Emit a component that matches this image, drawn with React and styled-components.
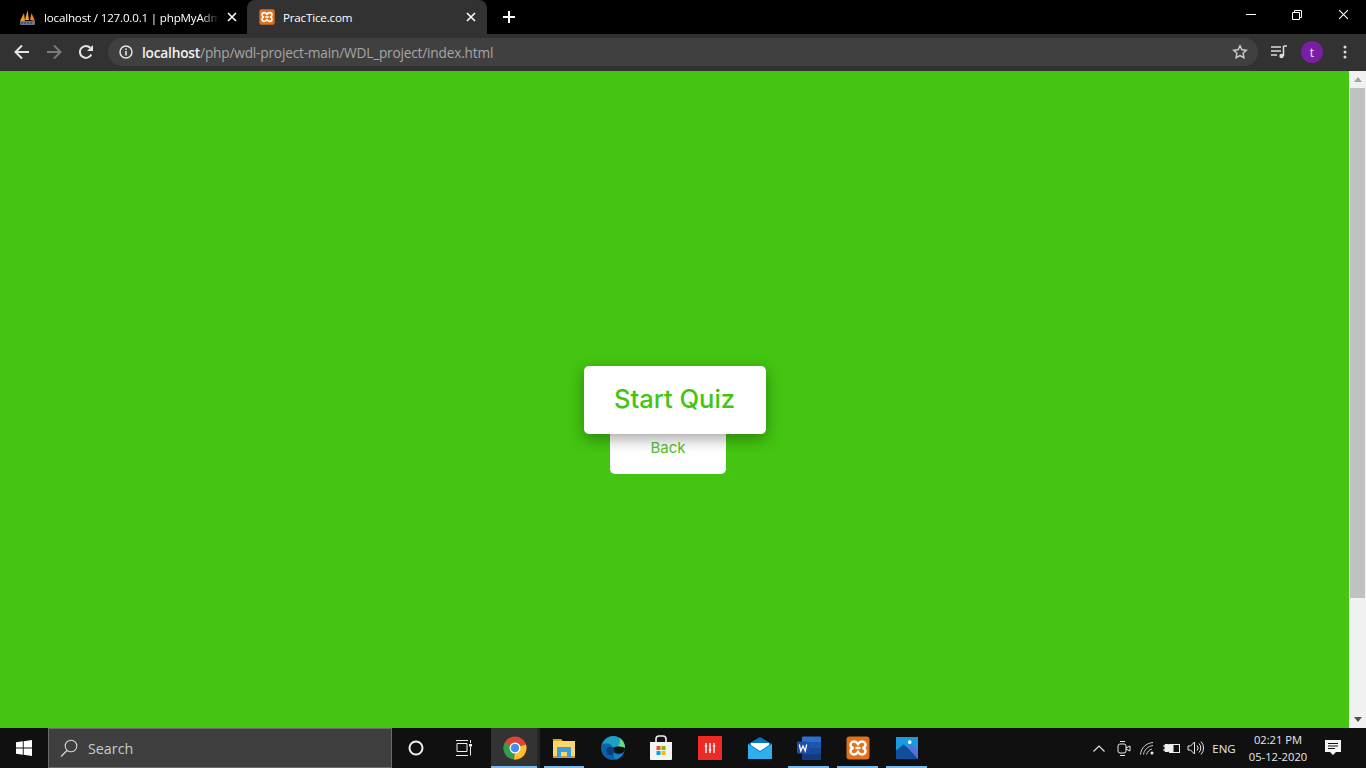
import React from "react";
import styled, { createGlobalStyle } from "styled-components";

const Global = createGlobalStyle`
  html, body {
    margin: 0;
    padding: 0;
    height: 100%;
    overflow: hidden;
  }
  #root {
    height: 100%;
  }
`;

const Screen = styled.div`
  display: flex;
  flex-direction: column;
  width: 1366px;
  height: 768px;
  font-family: "Open Sans", "Noto Sans", sans-serif;
  overflow: hidden;
`;

const TabStrip = styled.div`
  display: flex;
  align-items: flex-end;
  height: 34px;
  background: #000;
  color: #fff;
`;

const Tab = styled.div`
  display: flex;
  align-items: center;
  gap: 8px;
  flex: none;
  box-sizing: border-box;
  width: ${(p) => p.$width}px;
  height: 34px;
  padding: 0 ${(p) => p.$right}px 0 ${(p) => p.$left}px;
  background: ${(p) => (p.$active ? "#323232" : "transparent")};
  border-radius: 8px 8px 0 0;
`;

const TabTitle = styled.span`
  flex: 1;
  min-width: 0;
  font-size: 11.6px;
  letter-spacing: -0.18px;
  white-space: nowrap;
  overflow: hidden;
  -webkit-mask-image: ${(p) =>
    p.$fade ? "linear-gradient(90deg, #000 90%, transparent)" : "none"};
`;

const NewTab = styled.div`
  display: flex;
  align-items: center;
  justify-content: center;
  width: 44px;
  height: 34px;
`;

const WindowControls = styled.div`
  display: flex;
  margin-left: auto;
  align-self: flex-start;
  height: 30px;
`;

const WindowButton = styled.div`
  display: flex;
  align-items: center;
  justify-content: center;
  width: 46px;
  height: 29px;
`;

const Toolbar = styled.div`
  display: flex;
  align-items: center;
  box-sizing: border-box;
  height: 37px;
  padding: 0 0 1px 6px;
  background: #323232;
`;

const NavButton = styled.div`
  display: flex;
  align-items: center;
  justify-content: center;
  flex: none;
  width: ${(p) => p.$width || 32}px;
  height: 32px;
`;

const Omnibox = styled.div`
  display: flex;
  align-items: center;
  flex: none;
  box-sizing: border-box;
  width: 1150px;
  height: 28px;
  margin-left: 6px;
  padding: 0 10px 0 11px;
  background: #404040;
  border-radius: 14px;
`;

const Url = styled.div`
  flex: 1;
  margin-left: 9px;
  font-size: 13.7px;
  letter-spacing: -0.2px;
  color: #a6a6a6;
  white-space: nowrap;
`;

const Host = styled.span`
  color: #f1f1f1;
  font-weight: 600;
`;

const Avatar = styled.div`
  display: flex;
  align-items: center;
  justify-content: center;
  width: 22px;
  height: 22px;
  border-radius: 50%;
  background: #7a1ea6;
  color: #f4e9f9;
  font-size: 12px;
`;

const Viewport = styled.div`
  display: flex;
  flex: 1;
  min-height: 0;
`;

const Page = styled.main`
  display: flex;
  flex: 1;
  flex-direction: column;
  align-items: center;
  box-sizing: border-box;
  padding-top: 295px;
  background: #43c511;
  font-family: "Inter", "Open Sans", sans-serif;
`;

const StartButton = styled.button`
  position: relative;
  z-index: 1;
  width: 182px;
  height: 68px;
  padding: 0 0 3px;
  border: 0;
  border-radius: 5px;
  background: #fff;
  color: #43c511;
  font-family: inherit;
  font-size: 25.5px;
  font-weight: 500;
  box-shadow: 0 5px 15px rgba(0, 0, 0, 0.35);
`;

const BackButton = styled.button`
  width: 116px;
  height: 53px;
  margin: -13px 13px 0 0;
  padding: 0;
  border: 0;
  border-radius: 5px;
  background: #fff;
  color: #52c22f;
  font-family: inherit;
  font-size: 15px;
  font-weight: 400;
`;

const Scrollbar = styled.div`
  display: flex;
  flex-direction: column;
  align-items: center;
  flex: none;
  width: 17px;
  background: #f1f1f1;
`;

const ScrollArrow = styled.div`
  display: flex;
  align-items: center;
  justify-content: center;
  flex: none;
  height: 17px;
`;

const ScrollThumb = styled.div`
  flex: none;
  width: 15px;
  height: 510px;
  background: #c1c1c1;
`;

const ScrollTrack = styled.div`
  flex: 1;
`;

const Taskbar = styled.footer`
  display: flex;
  align-items: center;
  flex: none;
  height: 40px;
  background: #101010;
  color: #e8e8e8;
`;

const StartTile = styled.div`
  display: flex;
  align-items: center;
  justify-content: center;
  flex: none;
  width: 48px;
  height: 40px;
`;

const SearchBox = styled.div`
  display: flex;
  align-items: center;
  flex: none;
  box-sizing: border-box;
  width: 344px;
  height: 40px;
  padding-left: 11px;
  gap: 10px;
  background: #3f3f3f;
  border: 1px solid #6b6b6b;
  color: #c9c9c9;
  font-size: 14.3px;
`;

const TaskCell = styled.div`
  position: relative;
  display: flex;
  align-items: center;
  justify-content: center;
  flex: none;
  box-sizing: border-box;
  width: ${(p) => p.$width || 48}px;
  height: 40px;
  margin-left: ${(p) => (p.$active ? 3 : 0)}px;
  padding-left: ${(p) => (p.$active ? 1 : 0)}px;
  background: ${(p) => (p.$active ? "#333" : "transparent")};
  border-right: ${(p) => (p.$active ? "3px solid #262626" : "0")};

  &::after {
    content: "";
    display: ${(p) => (p.$open ? "block" : "none")};
    position: absolute;
    left: ${(p) => (p.$active ? 0 : 4)}px;
    right: ${(p) => (p.$active ? 0 : 4)}px;
    bottom: 0;
    height: 2px;
    background: #76b9ed;
  }
`;

const Tray = styled.div`
  display: flex;
  align-items: center;
  margin-left: auto;
  height: 40px;
`;

const TrayIcon = styled.div`
  display: flex;
  align-items: center;
  justify-content: center;
  flex: none;
  width: ${(p) => p.$width || 24}px;
  height: 40px;
`;

const TrayLang = styled.div`
  width: 34px;
  font-size: 11.5px;
  text-align: center;
`;

const Clock = styled.div`
  width: 60px;
  margin-left: 7px;
  font-size: 11.2px;
  line-height: 17px;
  text-align: center;
  white-space: nowrap;
`;

const XamppIcon = ({ size = 16 }) => (
  <svg width={size} height={size} viewBox="0 0 24 24">
    <rect x="0.5" y="0.5" width="23" height="23" rx="3" fill="#e2711d" />
    <path
      d="M8 5.500c2 0 3 1 4 2.500 1-1.500 2-2.500 4-2.500 2.500 0 3.500 2 3.500 3.500S18.500 11.500 16.500 12c2 .5 3 1.500 3 3s-1 3.500-3.500 3.500c-2 0-3-1-4-2.500-1 1.500-2 2.500-4 2.500-2.500 0-3.500-2-3.500-3.500s1-2.500 3-3c-2-.5-3-1.500-3-3S5.500 5.500 8 5.500z"
      fill="none"
      stroke="#fff"
      strokeWidth="2.4"
    />
    <path d="M9.500 12h5" stroke="#fff" strokeWidth="2.400" />
  </svg>
);

const PmaIcon = () => (
  <svg width="17" height="17" viewBox="0 0 17 17">
    <path d="M1 12 5 4l1 8z" fill="#f29a1f" />
    <path d="M6 11 8.500 1 10 11z" fill="#f4a21e" />
    <path d="M11 11l1.500-7L16 12z" fill="#e9861a" />
    <rect x="1" y="12" width="15" height="4" rx="1" fill="#6d7690" />
    <path d="M3 13v2M6 13v2M9 13v2M12 13v2" stroke="#2c3350" strokeWidth="1" />
  </svg>
);

const CloseIcon = ({ size = 10, width = 1.6 }) => (
  <svg width={size} height={size} viewBox="0 0 10 10">
    <path d="M1 1l8 8M9 1 1 9" stroke="#fff" strokeWidth={width} fill="none" />
  </svg>
);

const ChromeIcon = () => (
  <svg width="24" height="24" viewBox="0 0 24 24">
    <circle cx="12" cy="12" r="11.500" fill="#db4437" />
    <path d="M12 12 22.900 8.500A11.500 11.500 0 0 1 11 23.500z" fill="#fbc02d" />
    <path d="M12 12 11 23.500A11.500 11.500 0 0 1 2 6.500z" fill="#2e9e4f" />
    <circle cx="12" cy="12" r="5.500" fill="#fff" />
    <circle cx="12" cy="12" r="4.200" fill="#4a8af4" />
  </svg>
);

const ExplorerIcon = () => (
  <svg width="22" height="20" viewBox="0 0 22 20">
    <path d="M0 1h8l2 2v2H0z" fill="#d9a520" />
    <rect x="0" y="3" width="22" height="16" fill="#fcd667" />
    <rect x="0" y="18" width="22" height="2" fill="#c99a2e" />
    <path d="M4 9h14v10h-4v-5H8v5H4z" fill="#3f9be0" />
  </svg>
);

const EdgeIcon = () => (
  <svg width="24" height="24" viewBox="0 0 24 24">
    <circle cx="12" cy="12" r="12" fill="#0c62a8" />
    <path d="M1 9C3 3 8 0 12 0c7 0 12 5 12 12H12C11 8 5 6 1 9z" fill="#1f9fc4" />
    <path d="M24 12c0-4-2-8-6-10 2 3 1 6-1 8z" fill="#6fdc72" />
    <path d="M12 12c2-2 8-2 12 0 0 2-1 4-3 5-3 1-7 1-9-1-1-1-1-3 0-4z" fill="#101010" />
    <circle cx="9.500" cy="15" r="4" fill="#0a3f7a" />
    <path d="M13 16c2 3 6 3 9 1-1 3-4 6-7 6.500-2-1-3-4-2-7.500z" fill="#1a80c8" />
  </svg>
);

const StoreIcon = () => (
  <svg width="24" height="26" viewBox="0 0 24 26">
    <path d="M7 8V4c0-2 1-3 3-3h4c2 0 3 1 3 3v4" fill="none" stroke="#eee" strokeWidth="1.600" />
    <path d="M1 7h22v17a1 1 0 0 1-1 1H2a1 1 0 0 1-1-1z" fill="#f4f4f4" />
    <rect x="7.500" y="11" width="4" height="4" fill="#f25022" />
    <rect x="12.500" y="11" width="4" height="4" fill="#7fba00" />
    <rect x="7.500" y="16" width="4" height="4" fill="#00a4ef" />
    <rect x="12.500" y="16" width="4" height="4" fill="#ffb900" />
  </svg>
);

const RedAppIcon = () => (
  <svg width="24" height="24" viewBox="0 0 24 24">
    <rect width="24" height="24" fill="#ee2a24" />
    <path d="M8 7v10M12 7v10M16 7v10" stroke="#fff" strokeWidth="1.400" />
    <path d="M6.800 10h2.400M10.800 14h2.400M14.800 10h2.400" stroke="#fff" strokeWidth="1.400" />
  </svg>
);

const MailIcon = () => (
  <svg width="24" height="24" viewBox="0 0 24 24">
    <path d="M0 8 12 1l12 7v15H0z" fill="#0a74c4" />
    <path d="M0 8l12 8 12-8v15H0z" fill="#2fb0ee" />
    <path d="M3 7h18v2l-9 6-9-6z" fill="#fff" />
  </svg>
);

const WordIcon = () => (
  <svg width="24" height="24" viewBox="0 0 24 24">
    <rect x="5" y="0.500" width="19" height="23" rx="1" fill="#2b6fcf" />
    <rect x="5" y="6" width="19" height="6" fill="#1e56ae" />
    <rect x="5" y="12" width="19" height="6" fill="#174a9b" />
    <rect x="5" y="18" width="19" height="5.500" fill="#123b82" />
    <rect x="0" y="5.500" width="12" height="12" rx="1" fill="#1d4fa8" />
    <path d="M2.300 8.500l1.500 6.500 2.200-5 2.200 5 1.500-6.500" fill="none" stroke="#fff" strokeWidth="1.300" />
  </svg>
);

const PhotosIcon = () => (
  <svg width="22" height="22" viewBox="0 0 24 24">
    <rect width="24" height="24" fill="#1c7fd0" />
    <path d="M0 0h24v14L0 14z" fill="#1a9be0" />
    <path d="M0 24V15l8-7 10 8 6 8z" fill="#0f4e9a" />
    <path d="M13 12l4-3 7 5v10z" fill="#5a6fd8" />
    <circle cx="15" cy="5.500" r="2" fill="#fff" />
  </svg>
);

const TASK_APPS = [
  { icon: <ChromeIcon />, width: 49, open: true, active: true },
  { icon: <ExplorerIcon />, width: 48, open: true },
  { icon: <EdgeIcon />, width: 49 },
  { icon: <StoreIcon />, width: 48 },
  { icon: <RedAppIcon />, width: 50 },
  { icon: <MailIcon />, width: 49 },
  { icon: <WordIcon />, width: 49, open: true },
  { icon: <XamppIcon size={24} />, width: 49, open: true },
  { icon: <PhotosIcon />, width: 49, open: true },
];

const App = () => (
  <Screen>
    <Global />
    <TabStrip>
      <Tab $width={247} $left={19} $right={10}>
        <PmaIcon />
        <TabTitle $fade>localhost / 127.0.0.1 | phpMyAdmin</TabTitle>
        <CloseIcon />
      </Tab>
      <Tab $width={240} $left={12} $right={11} $active>
        <XamppIcon />
        <TabTitle>PracTice.com</TabTitle>
        <CloseIcon />
      </Tab>
      <NewTab>
        <svg width="12" height="12" viewBox="0 0 12 12">
          <path d="M6 0v12M0 6h12" stroke="#fff" strokeWidth="2" />
        </svg>
      </NewTab>
      <WindowControls>
        <WindowButton>
          <svg width="10" height="10" viewBox="0 0 10 10">
            <path d="M0 4.500h10" stroke="#fff" strokeWidth="1" />
          </svg>
        </WindowButton>
        <WindowButton>
          <svg width="10" height="10" viewBox="0 0 10 10">
            <path d="M.5 2.500h7v7h-7zM2.500 2.500v-2h7v7h-2" fill="none" stroke="#fff" strokeWidth="1" />
          </svg>
        </WindowButton>
        <WindowButton>
          <CloseIcon size={11} width={1} />
        </WindowButton>
      </WindowControls>
    </TabStrip>

    <Toolbar>
      <NavButton>
        <svg width="16" height="16" viewBox="0 0 16 16">
          <path d="M15 8H2M8 1.500 1.500 8 8 14.500" fill="none" stroke="#e4e4e4" strokeWidth="2" />
        </svg>
      </NavButton>
      <NavButton>
        <svg width="16" height="16" viewBox="0 0 16 16">
          <path d="M1 8h13M8 1.500 14.500 8 8 14.500" fill="none" stroke="#7a7a7a" strokeWidth="2" />
        </svg>
      </NavButton>
      <NavButton>
        <svg width="16" height="16" viewBox="0 0 16 16">
          <path d="M13.300 10.500A6 6 0 1 1 12.300 3.800" fill="none" stroke="#e4e4e4" strokeWidth="2" />
          <path d="M15 1v6H9z" fill="#e4e4e4" />
        </svg>
      </NavButton>
      <Omnibox>
        <svg width="14" height="14" viewBox="0 0 14 14">
          <circle cx="7" cy="7" r="6" fill="none" stroke="#e4e4e4" strokeWidth="1.500" />
          <path d="M7 6v4.500M7 3.500V5" stroke="#e4e4e4" strokeWidth="1.600" />
        </svg>
        <Url>
          <Host>localhost</Host>/php/wdl-project-main/WDL_project/index.html
        </Url>
        <svg width="16" height="16" viewBox="0 0 16 16">
          <path
            d="M8 1.800l1.900 4 4.400.5-3.200 3 .8 4.400L8 11.600l-3.900 2.100.8-4.400-3.200-3 4.400-.5z"
            fill="none"
            stroke="#cfcfcf"
            strokeWidth="1.400"
          />
        </svg>
      </Omnibox>
      <NavButton $width={42}>
        <svg width="16" height="14" viewBox="0 0 16 14">
          <path d="M0 2h10M0 6h10M0 10h6" stroke="#dcdcdc" strokeWidth="1.300" />
          <path d="M12.500 1v10" stroke="#dcdcdc" strokeWidth="1.500" />
          <path d="M12.500 1H16" stroke="#dcdcdc" strokeWidth="1.500" />
          <circle cx="10.500" cy="11" r="2.200" fill="#dcdcdc" />
        </svg>
      </NavButton>
      <NavButton $width={24}>
        <Avatar>t</Avatar>
      </NavButton>
      <NavButton $width={42}>
        <svg width="4" height="14" viewBox="0 0 4 14">
          <circle cx="2" cy="2" r="1.500" fill="#dcdcdc" />
          <circle cx="2" cy="7" r="1.500" fill="#dcdcdc" />
          <circle cx="2" cy="12" r="1.500" fill="#dcdcdc" />
        </svg>
      </NavButton>
    </Toolbar>

    <Viewport>
      <Page>
        <StartButton>Start Quiz</StartButton>
        <BackButton>Back</BackButton>
      </Page>
      <Scrollbar>
        <ScrollArrow>
          <svg width="8" height="5" viewBox="0 0 8 5">
            <path d="M0 5 4 0l4 5z" fill="#a3a3a3" />
          </svg>
        </ScrollArrow>
        <ScrollThumb />
        <ScrollTrack />
        <ScrollArrow>
          <svg width="8" height="5" viewBox="0 0 8 5">
            <path d="M0 0l4 5 4-5z" fill="#505050" />
          </svg>
        </ScrollArrow>
      </Scrollbar>
    </Viewport>

    <Taskbar>
      <StartTile>
        <svg width="16" height="16" viewBox="0 0 16 16">
          <path d="M0 2.300 6.800 1.300v6.200H0zM7.700 1.200 16 0v7.500H7.700zM0 8.500h6.800v6.200L0 13.700zM7.700 8.500H16V16l-8.300-1.200z" fill="#fff" />
        </svg>
      </StartTile>
      <SearchBox>
        <svg width="18" height="18" viewBox="0 0 18 18">
          <circle cx="11" cy="7" r="5.800" fill="none" stroke="#d6d6d6" strokeWidth="1.100" />
          <path d="M7 11.500 1 17.500" stroke="#d6d6d6" strokeWidth="1.200" />
        </svg>
        Search
      </SearchBox>
      <TaskCell>
        <svg width="16" height="16" viewBox="0 0 16 16">
          <circle cx="8" cy="8" r="6.500" fill="none" stroke="#f0f0f0" strokeWidth="2" />
        </svg>
      </TaskCell>
      <TaskCell>
        <svg width="16" height="16" viewBox="0 0 16 16">
          <path d="M0 .5h12M0 15.500h12M1 3.500h10v8H1zM14.500 0v3M14.500 6.500v9" fill="none" stroke="#eee" strokeWidth="1" />
          <rect x="13" y="4" width="3" height="2.500" fill="#eee" />
        </svg>
      </TaskCell>
      {TASK_APPS.map((app, i) => (
        <TaskCell key={i} $width={app.width} $open={app.open} $active={app.active}>
          {app.icon}
        </TaskCell>
      ))}
      <Tray>
        <TrayIcon>
          <svg width="12" height="7" viewBox="0 0 12 7">
            <path d="M.5 6.500 6 1l5.500 5.500" fill="none" stroke="#e8e8e8" strokeWidth="1.100" />
          </svg>
        </TrayIcon>
        <TrayIcon $width={25}>
          <svg width="14" height="17" viewBox="0 0 14 17">
            <rect x="1" y="4" width="8" height="9" rx="2" fill="none" stroke="#e8e8e8" strokeWidth="1" />
            <path d="M9 8l4-2v5l-4-2M3 1.500h5M3 15.500h5" fill="none" stroke="#e8e8e8" strokeWidth="1" />
          </svg>
        </TrayIcon>
        <TrayIcon $width={23}>
          <svg width="15" height="13" viewBox="0 0 15 13">
            <path d="M.5 12.500C1 6 6 1 13 .5M3.500 12.500C4 8 8 4 13 3.500M6.500 12.500C7 10 9.500 7.500 12 7" fill="none" stroke="#cfcfcf" strokeWidth="1" />
            <circle cx="12" cy="11" r="1.500" fill="#eee" />
          </svg>
        </TrayIcon>
        <TrayIcon>
          <svg width="17" height="11" viewBox="0 0 17 11">
            <path d="M0 3h2M0 7h2M2 1.500h3.500v7H2z" fill="#eee" stroke="#eee" strokeWidth="1" />
            <rect x="6.500" y="1.500" width="10" height="8" fill="none" stroke="#eee" strokeWidth="1" />
            <rect x="6.500" y="1.500" width="4" height="8" fill="#eee" />
          </svg>
        </TrayIcon>
        <TrayIcon>
          <svg width="17" height="14" viewBox="0 0 17 14">
            <path d="M1 5h2.500L7.500 1v12l-4-4H1zM10 4.500a3.500 3.500 0 0 1 0 5M12 2.500a6.500 6.500 0 0 1 0 9M14 .5a9.500 9.500 0 0 1 0 13" fill="none" stroke="#e8e8e8" strokeWidth="1" />
          </svg>
        </TrayIcon>
        <TrayLang>ENG</TrayLang>
        <Clock>
          02:21 PM
          <br />
          05-12-2020
        </Clock>
        <TrayIcon $width={50}>
          <svg width="16" height="16" viewBox="0 0 16 16">
            <path d="M0 0h16v12H11l-3 3-3-3H0z" fill="#f4f4f4" />
            <path d="M3 3.500h10M3 6h10M3 8.500h7" stroke="#101010" strokeWidth="1" />
          </svg>
        </TrayIcon>
        <TrayIcon $width={8} />
      </Tray>
    </Taskbar>
  </Screen>
);

export default App;
